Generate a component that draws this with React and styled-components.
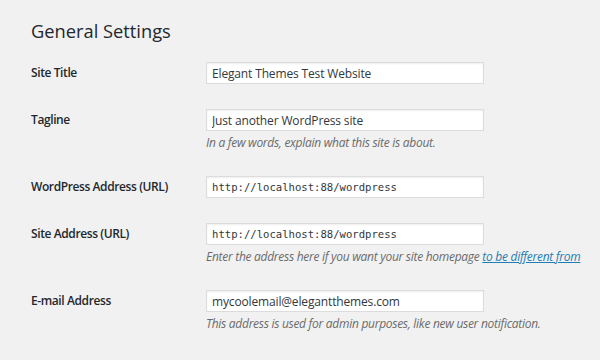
import React from 'react';
import styled, { createGlobalStyle } from 'styled-components';

const GlobalStyle = createGlobalStyle`
  html, body {
    margin: 0;
    padding: 0;
    background: #f1f1f1;
  }
  body {
    font-family: "Open Sans", "Liberation Sans", sans-serif;
    color: #23282d;
  }
`;

const fields = [
  { label: 'Site Title', value: 'Elegant Themes Test Website' },
  {
    label: 'Tagline',
    value: 'Just another WordPress site',
    description: 'In a few words, explain what this site is about.',
  },
  { label: 'WordPress Address (URL)', value: 'http://localhost:88/wordpress', code: true },
  {
    label: 'Site Address (URL)',
    value: 'http://localhost:88/wordpress',
    code: true,
    description: 'Enter the address here if you want your site homepage ',
    link: 'to be different from',
  },
  {
    label: 'E-mail Address',
    value: 'mycoolemail@elegantthemes.com',
    description: 'This address is used for admin purposes, like new user notification.',
  },
];

const App = () => {
  return (
    <Wrap>
      <GlobalStyle />
      <Title>General Settings</Title>
      <Form>
        {fields.map((f) => (
          <Row key={f.label}>
            <Label>{f.label}</Label>
            <Field>
              <Input $code={f.code} defaultValue={f.value} />
              {f.description && (
                <Description>
                  {f.description}
                  {f.link && <a href="#">{f.link}</a>}
                </Description>
              )}
            </Field>
          </Row>
        ))}
      </Form>
    </Wrap>
  );
};

const Wrap = styled.div`
  width: 600px;
  height: 360px;
  overflow: hidden;
  box-sizing: border-box;
  padding: 18px 0 0 31px;
`;

const Title = styled.h1`
  margin: 0 0 18px;
  font-size: 18.3px;
  line-height: 26px;
  font-weight: 400;
  color: #23282d;
`;

const Form = styled.div`
  display: flex;
  flex-direction: column;
`;

const Row = styled.div`
  display: grid;
  grid-template-columns: 175px 278px;
  padding-bottom: 25px;
`;

const Label = styled.div`
  font-size: 12px;
  font-weight: 600;
  line-height: 22px;
  letter-spacing: -0.4px;
  color: #23282d;
`;

const Field = styled.div`
  display: flex;
  flex-direction: column;
`;

const Input = styled.input`
  box-sizing: border-box;
  width: 278px;
  height: 22px;
  margin: 0;
  padding: 0 5px;
  border: 1px solid #dcdcdc;
  background: #fff;
  box-shadow: inset 0 1px 2px rgba(0, 0, 0, 0.07);
  outline: none;
  color: #32373c;
  font-family: ${(p) =>
    p.$code ? '"DejaVu Sans Mono", "Liberation Mono", monospace' : '"Open Sans", "Liberation Sans", sans-serif'};
  font-size: ${(p) => (p.$code ? '10.6px' : '12px')};
  letter-spacing: ${(p) => (p.$code ? '0' : '-0.15px')};
`;

const Description = styled.p`
  margin: 3px 0 0;
  font-size: 12px;
  line-height: 17px;
  font-style: italic;
  letter-spacing: -0.28px;
  color: #6b6b6b;
  white-space: nowrap;

  a {
    color: #1f7db3;
    text-decoration: underline;
  }
`;

export default App;
